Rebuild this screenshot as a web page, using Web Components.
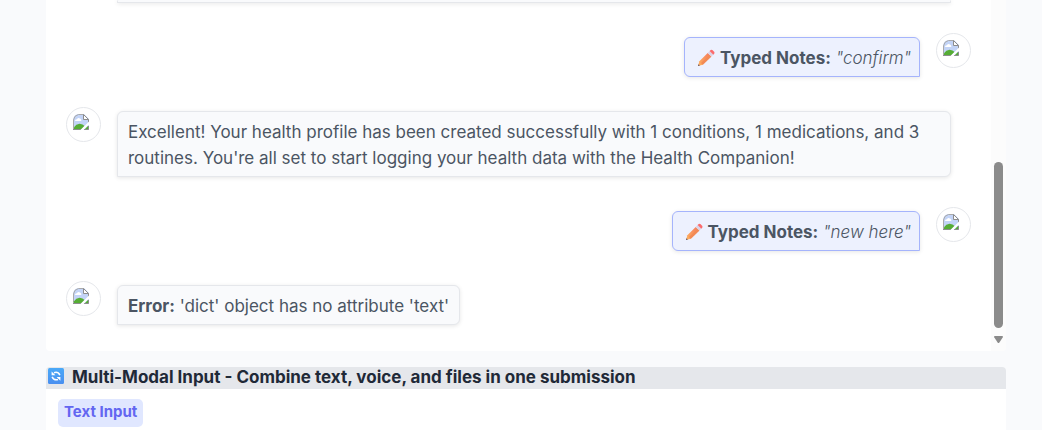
<!DOCTYPE html>
<html lang="en">
<head>
<meta charset="utf-8">
<title>Health Companion</title>
<style>
  html, body { height: 100%; }
  body {
    margin: 0;
    background: #f9fafc;
    color: #4b5563;
    font: 17px/26px Inter, "Open Sans", sans-serif;
    overflow: hidden;
  }
</style>
</head>
<body>
<health-app>
  <chat-panel>
    <chat-message continued></chat-message>
    <chat-message from="user"><pencil-icon></pencil-icon> <strong>Typed Notes:</strong> <em>"confirm"</em></chat-message>
    <chat-message>Excellent! Your health profile has been created successfully with 1 conditions, 1 medications, and 3 routines. You're all set to start logging your health data with the Health Companion!</chat-message>
    <chat-message from="user"><pencil-icon></pencil-icon> <strong>Typed Notes:</strong> <em>"new here"</em></chat-message>
    <chat-message><strong>Error:</strong> 'dict' object has no attribute 'text'</chat-message>
  </chat-panel>
  <input-panel>
    <span slot="title">Multi-Modal Input - Combine text, voice, and files in one submission</span>
    <field-label>Text Input</field-label>
  </input-panel>
</health-app>

<script>
  const define = (name, html) => {
    const template = document.createElement('template');
    template.innerHTML = html;
    customElements.define(name, class extends HTMLElement {
      constructor() {
        super();
        this.attachShadow({ mode: 'open' }).append(template.content.cloneNode(true));
      }
    });
  };

  define('health-app', `
    <style>
      :host { display: flex; flex-direction: column; gap: 16px; height: 100%; padding: 0 36px 0 46px; box-sizing: border-box; }
      ::slotted(input-panel) { flex: 1; }
    </style>
    <slot></slot>`);

  define('chat-panel', `
    <style>
      :host { display: flex; background: #fff; border-radius: 0 0 4px 4px; overflow: hidden; }
      .messages { flex: 1; min-width: 0; display: flex; flex-direction: column; gap: 30px; padding: 0 20px 26px; }
    </style>
    <div class="messages"><slot></slot></div>
    <scroll-track></scroll-track>`);

  define('scroll-track', `
    <style>
      :host { display: flex; flex-direction: column; align-items: center; justify-content: flex-end; gap: 8px;
              width: 15px; padding-bottom: 8px; box-sizing: border-box; background: #fcfcfc; }
      .thumb { width: 9px; height: 166px; border-radius: 5px; background: #8b8b8b; }
      svg { display: block; }
    </style>
    <div class="thumb"></div>
    <svg width="9" height="7" viewBox="0 0 9 7" aria-hidden="true"><path d="M.8 0h7.4q1 .4.6 1.3L5.4 6.4q-.9 1.1-1.8 0L.2 1.3Q-.2.4.8 0z" fill="#8b8b8b"/></svg>`);

  define('chat-message', `
    <style>
      :host { display: flex; align-items: flex-start; gap: 16px; padding-right: 20px; }
      :host([from="user"]) { flex-direction: row-reverse; padding-right: 0; }
      .bubble { margin-top: 4px; padding: 7px 10px 5px; border: 1px solid #e5e7eb; border-radius: 6px 6px 6px 0;
                background: #f9fafc; box-shadow: 0 1px 4px rgba(0, 0, 0, .1); }
      :host([from="user"]) .bubble { padding-left: 12px; padding-right: 8px; background: #edf1fe; border-color: #a5b4fc; border-radius: 6px 6px 0 6px; }
      :host([continued]) { padding-left: 51px; }
      :host([continued]) avatar-image { display: none; }
      :host([continued]) .bubble { flex: 1; height: 2px; margin-top: 0; padding: 0; border-top: 0; }
      ::slotted(strong) { font-weight: 700; color: #4b5563; }
      ::slotted(em) { font-style: italic; font-weight: 300; }
    </style>
    <avatar-image></avatar-image>
    <div class="bubble"><slot></slot></div>`);

  define('avatar-image', `
    <style>
      :host { display: block; flex: none; width: 35px; height: 35px; padding: 6px; box-sizing: border-box;
              border: 1px solid #e5e7eb; border-radius: 50%; background: #fff; }
      svg { display: block; }
    </style>
    <svg width="16" height="16" viewBox="0 0 16 16" role="img" aria-label="Missing picture">
      <path d="M5 0h6l5 5v11H0V6Q.500 1 5 0z" fill="#c3d4f7"/>
      <path d="M.5 16V6Q1 1.500 5.500.5h5" fill="none" stroke="#aaa"/>
      <path d="M2 7Q2 5 4 5.200 5 3 7 4.500q1.700.5 1.300 2.500z" fill="#fff"/>
      <path d="M1 15.500v-2.300Q3 10 6.500 9.700q3.500.2 5 2.300L8 15.500z" fill="#56ad35"/>
      <path d="M10.500.5v5h5z" fill="#fff" stroke="#8d8d8d"/>
      <path d="M15.500 5.500v5M0 15.500h8M11 15.500h4.500V12" fill="none" stroke="#8d8d8d"/>
      <path d="M16 7.500v3L10.500 16H7.500z" fill="#fff"/>
      <path d="M12 15l3-3v3z" fill="#56ad35"/>
    </svg>`);

  define('pencil-icon', `
    <style>
      :host { display: inline-block; width: 18px; height: 18px; vertical-align: -3px; }
      svg { display: block; }
    </style>
    <svg width="18" height="18" viewBox="0 0 18 18" aria-hidden="true">
      <defs><linearGradient id="wood" x1="0" y1="1" x2="1" y2="0"><stop stop-color="#ffb35c"/><stop offset="1" stop-color="#f4795f"/></linearGradient></defs>
      <path d="M2.400 12.300 10.700 4l3.600 3.600-8.500 8.200L1 17z" fill="url(#wood)"/>
      <path d="M4 14 12.500 5.800l1.800 1.800-8.500 8.200z" fill="#f28a55"/>
      <path d="M10.700 4 12.600 2.100l3.700 3.700-2 1.800z" fill="#dbd3e6"/>
      <path d="M12.600 2.100 13.700 1q1-.7 2 .2l1.400 1.500q.9 1 .1 2l-.9 1.100z" fill="#fb6b6c"/>
      <path d="M1.500 15.300 1 17l1.900-.5z" fill="#51455e"/>
    </svg>`);

  define('refresh-icon', `
    <style>
      :host { display: block; width: 16px; height: 16px; }
      svg { display: block; }
    </style>
    <svg width="16" height="16" viewBox="0 0 16 16" aria-hidden="true">
      <defs><linearGradient id="sky" x1="0" y1="0" x2="0" y2="1"><stop stop-color="#4aa9f8"/><stop offset="1" stop-color="#4a8ff0"/></linearGradient></defs>
      <rect width="16" height="16" rx="1.500" fill="url(#sky)"/>
      <path d="M6 4.700Q10 3.300 11.900 7.200M10 11.500Q6 12.700 4.100 8.800" fill="none" stroke="#fff" stroke-width="1.500"/>
      <path d="M3.600 3.500v3.800h3.800zM12.400 12.700V8.900H8.600z" fill="#fff"/>
    </svg>`);

  define('input-panel', `
    <style>
      :host { display: block; background: #fff; border-radius: 4px 4px 0 0; overflow: hidden; }
      header { display: flex; align-items: flex-start; gap: 8px; padding: 1px 2px; background: #e5e7eb; }
      h2 { margin: 0; padding-bottom: 2px; font-size: 17px; line-height: 18px; font-weight: 700; color: #1f2937; }
      .fields { padding: 10px 12px; }
    </style>
    <header><refresh-icon></refresh-icon><h2><slot name="title"></slot></h2></header>
    <div class="fields"><slot></slot></div>`);

  define('field-label', `
    <style>
      :host { display: block; width: fit-content; padding: 3px 6px 5px; border-radius: 5px; background: #e0e7ff; color: #6366f1;
              font-size: 15px; line-height: 20px; font-weight: 700; }
    </style>
    <slot></slot>`);
</script>
</body>
</html>
